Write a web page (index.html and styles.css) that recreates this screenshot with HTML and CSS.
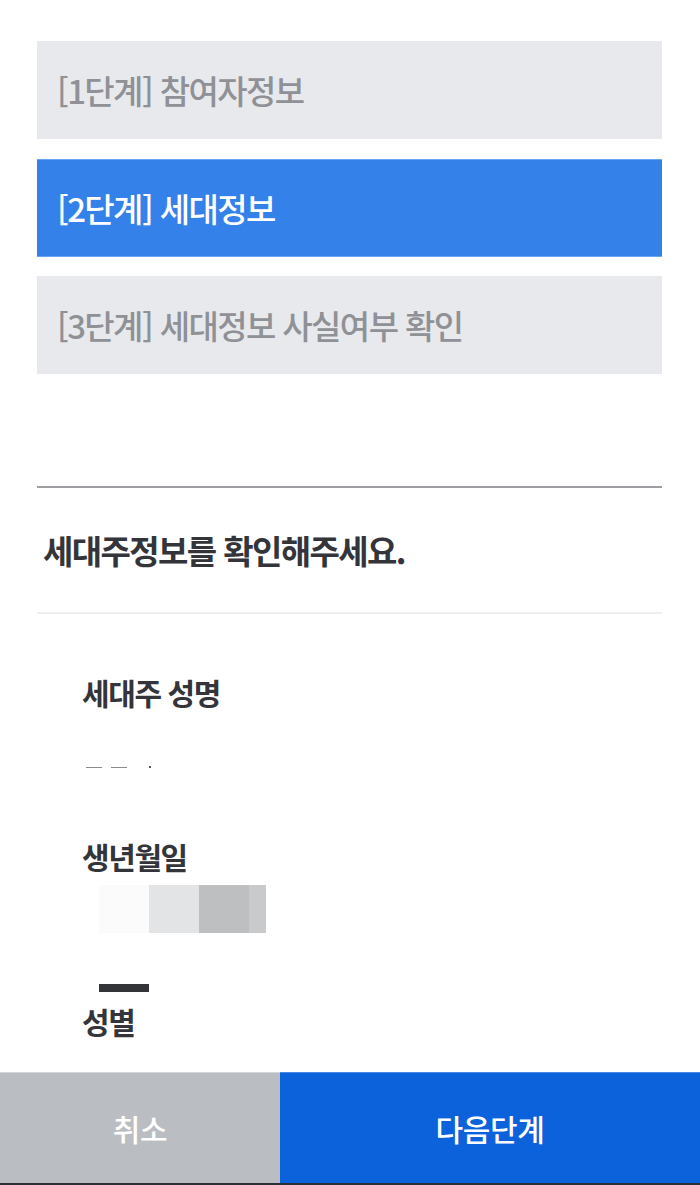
FILE: index.html
```html
<!DOCTYPE html>
<html lang="ko">
<head>
<meta charset="utf-8">
<title>세대정보</title>
<link rel="stylesheet" href="styles.css">
</head>
<body>
<main class="page">
  <ol class="steps">
    <li class="step">[1단계] 참여자정보</li>
    <li class="step active">[2단계] 세대정보</li>
    <li class="step">[3단계] 세대정보 사실여부 확인</li>
  </ol>

  <section class="info">
    <h2 class="info-title">세대주정보를 확인해주세요.</h2>
    <div class="field">
      <div class="label">세대주 성명</div>
      <div class="frag">
        <span class="dash"></span><span class="dash"></span><span class="dot"></span>
      </div>
    </div>
    <div class="field">
      <div class="label">생년월일</div>
      <div class="blur">
        <span class="b1"></span><span class="b2"></span><span class="b3"></span><span class="b4"></span>
      </div>
      <div class="darkbar"></div>
    </div>
    <div class="field">
      <div class="label label-last">성별</div>
    </div>
  </section>
</main>

<nav class="actions">
  <button class="btn cancel" type="button">취소</button>
  <button class="btn next" type="button">다음단계</button>
</nav>
</body>
</html>
```

FILE: styles.css
```css
* { box-sizing: border-box; }
html, body { margin: 0; padding: 0; background: #ffffff; }
body {
  font-family: "Noto Sans CJK KR", "Noto Sans", sans-serif;
  color: #33353a;
  height: 1185px;
  overflow: hidden;
}
.page {
  padding: 41px 38px 0 37px;
}
.steps {
  list-style: none;
  margin: 0;
  padding: 0;
  display: flex;
  flex-direction: column;
  gap: 19.5px;
}
.step {
  height: 98px;
  display: flex;
  align-items: center;
  padding-left: 20px;
  background: #e8e9ec;
  color: #8f9196;
  font-size: 33px;
  font-weight: 500;
  letter-spacing: -1.6px;
}
.step.active {
  background: #3481ea;
  color: #ffffff;
  border-top: 1px solid #6aa4f0;
  border-bottom: 1px solid #6aa4f0;
}
.info {
  margin-top: 112px;
  border-top: 2px solid #9c9ea1;
}
.info-title {
  margin: 0;
  height: 126px;
  display: flex;
  align-items: center;
  padding-left: 6px;
  font-size: 33px;
  font-weight: 700;
  letter-spacing: -1.6px;
  color: #33353a;
  border-bottom: 2px solid #efeff0;
}
.field { padding-left: 45px; }
.label {
  height: 40px;
  line-height: 40px;
  font-size: 30px;
  font-weight: 700;
  letter-spacing: -1.4px;
  color: #33353a;
}
.field:nth-child(2) .label { margin-top: 58px; }
.frag {
  display: flex;
  align-items: center;
  height: 2px;
  margin: 54px 0 68px 4px;
}
.dash {
  width: 16px;
  height: 1px;
  background: #8a8b8e;
  margin-right: 9px;
}
.dot {
  width: 2px;
  height: 2px;
  background: #55565a;
  margin-left: 13px;
}
.blur {
  display: flex;
  height: 48px;
  margin: 9px 0 0 17px;
}
.blur span { display: block; height: 100%; }
.b1 { width: 50px; background: #fbfbfc; }
.b2 { width: 50px; background: #e3e4e6; }
.b3 { width: 50px; background: #bebfc1; }
.b4 { width: 17px; background: #c9cacc; }
.darkbar {
  width: 50px;
  height: 8px;
  margin: 51px 0 0 17px;
  background: #333438;
}
.label-last { margin-top: 9px; }

.actions {
  position: fixed;
  left: 0;
  right: 0;
  bottom: 0;
  height: 113px;
  display: grid;
  grid-template-columns: 280px 1fr;
  border-bottom: 2px solid #2c2f36;
}
.btn {
  border: 0;
  margin: 0;
  padding: 0;
  font-family: "Noto Sans CJK KR", "Noto Sans", sans-serif;
  font-size: 30px;
  font-weight: 500;
  letter-spacing: -0.4px;
  color: #ffffff;
  cursor: pointer;
}
.cancel {
  background: #babdc2;
  border-top: 1px solid #d3d5d8;
}
.next {
  background: #0b62db;
  border-top: 1px solid #4a8ae6;
}
```
